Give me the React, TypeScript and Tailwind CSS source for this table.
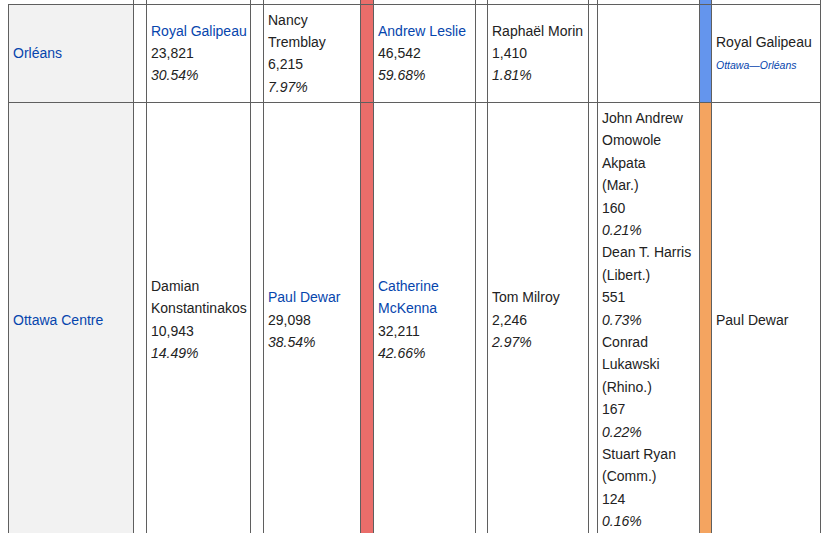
import type { ReactNode } from "react";

const LIBERAL = "bg-[#ea6d6a]";

type Line = { text: string; link?: boolean; italic?: boolean };

const l = (text: string): Line => ({ text });
const a = (text: string): Line => ({ text, link: true });
const i = (text: string): Line => ({ text, italic: true });

const cell = "border border-[#5f5f5f] px-1 py-1 align-middle";

function Lines({ lines }: { lines: Line[] }) {
  return (
    <>
      {lines.map((ln, idx) => (
        <span key={idx}>
          {idx > 0 && <br />}
          <span
            className={`${ln.link ? "text-[#0645ad]" : ""} ${ln.italic ? "italic" : ""}`}
          >
            {ln.text}
          </span>
        </span>
      ))}
    </>
  );
}

function Strip({ color, children }: { color?: string; children?: ReactNode }) {
  return <td className={`${cell} px-0 ${color ?? ""}`}>{children}</td>;
}

type Row = {
  riding: string;
  cons: Line[];
  ndp: Line[];
  lib: Line[];
  green: Line[];
  other: Line[];
  incumbent: ReactNode;
  incColor: string;
};

const rows: Row[] = [
  {
    riding: "Orléans",
    cons: [a("Royal Galipeau"), l("23,821"), i("30.54%")],
    ndp: [l("Nancy"), l("Tremblay"), l("6,215"), i("7.97%")],
    lib: [a("Andrew Leslie"), l("46,542"), i("59.68%")],
    green: [l("Raphaël Morin"), l("1,410"), i("1.81%")],
    other: [],
    incumbent: (
      <>
        Royal Galipeau
        <br />
        <span className="text-[10.5px] italic text-[#0645ad]">Ottawa—Orléans</span>
      </>
    ),
    incColor: "bg-[#6495ed]",
  },
  {
    riding: "Ottawa Centre",
    cons: [l("Damian"), l("Konstantinakos"), l("10,943"), i("14.49%")],
    ndp: [a("Paul Dewar"), l("29,098"), i("38.54%")],
    lib: [a("Catherine"), a("McKenna"), l("32,211"), i("42.66%")],
    green: [l("Tom Milroy"), l("2,246"), i("2.97%")],
    other: [
      l("John Andrew"),
      l("Omowole"),
      l("Akpata"),
      l("(Mar.)"),
      l("160"),
      i("0.21%"),
      l("Dean T. Harris"),
      l("(Libert.)"),
      l("551"),
      i("0.73%"),
      l("Conrad"),
      l("Lukawski"),
      l("(Rhino.)"),
      l("167"),
      i("0.22%"),
      l("Stuart Ryan"),
      l("(Comm.)"),
      l("124"),
      i("0.16%"),
    ],
    incumbent: "Paul Dewar",
    incColor: "bg-[#f4a460]",
  },
];

const widths = [125, 13, 104, 13, 97, 13, 102, 12, 101, 9, 102, 12, 109];

export default function App() {
  return (
    <div className="h-[533px] w-[830px] overflow-hidden bg-white pl-[8px] font-['Liberation_Sans',Arial,sans-serif] text-[14px] leading-[1.6] text-[#222]">
      <table className="w-[813px] table-fixed border-collapse whitespace-nowrap">
        <colgroup>
          <col className="w-[125px]" />
          <col className="w-[13px]" />
          <col className="w-[104px]" />
          <col className="w-[13px]" />
          <col className="w-[97px]" />
          <col className="w-[13px]" />
          <col className="w-[102px]" />
          <col className="w-[12px]" />
          <col className="w-[101px]" />
          <col className="w-[9px]" />
          <col className="w-[102px]" />
          <col className="w-[12px]" />
          <col className="w-[109px]" />
        </colgroup>
        <tbody>
          <tr className="h-[4px]">
            {widths.map((_, idx) => (
              <td
                key={idx}
                className={`h-[4px] border-x border-b border-[#5f5f5f] p-0 ${
                  idx === 0 ? "border-l-0" : ""
                } ${idx === 5 ? LIBERAL : ""} ${idx === 11 ? "bg-[#6495ed]" : ""}`}
              />
            ))}
          </tr>
          {rows.map((r) => (
            <tr key={r.riding}>
              <td className={`${cell} bg-[#f2f2f2] text-[#0645ad]`}>{r.riding}</td>
              <Strip />
              <td className={cell}>
                <Lines lines={r.cons} />
              </td>
              <Strip />
              <td className={cell}>
                <Lines lines={r.ndp} />
              </td>
              <Strip color={LIBERAL} />
              <td className={cell}>
                <Lines lines={r.lib} />
              </td>
              <Strip />
              <td className={cell}>
                <Lines lines={r.green} />
              </td>
              <Strip />
              <td className={cell}>
                <Lines lines={r.other} />
              </td>
              <Strip color={r.incColor} />
              <td className={cell}>{r.incumbent}</td>
            </tr>
          ))}
        </tbody>
      </table>
    </div>
  );
}
